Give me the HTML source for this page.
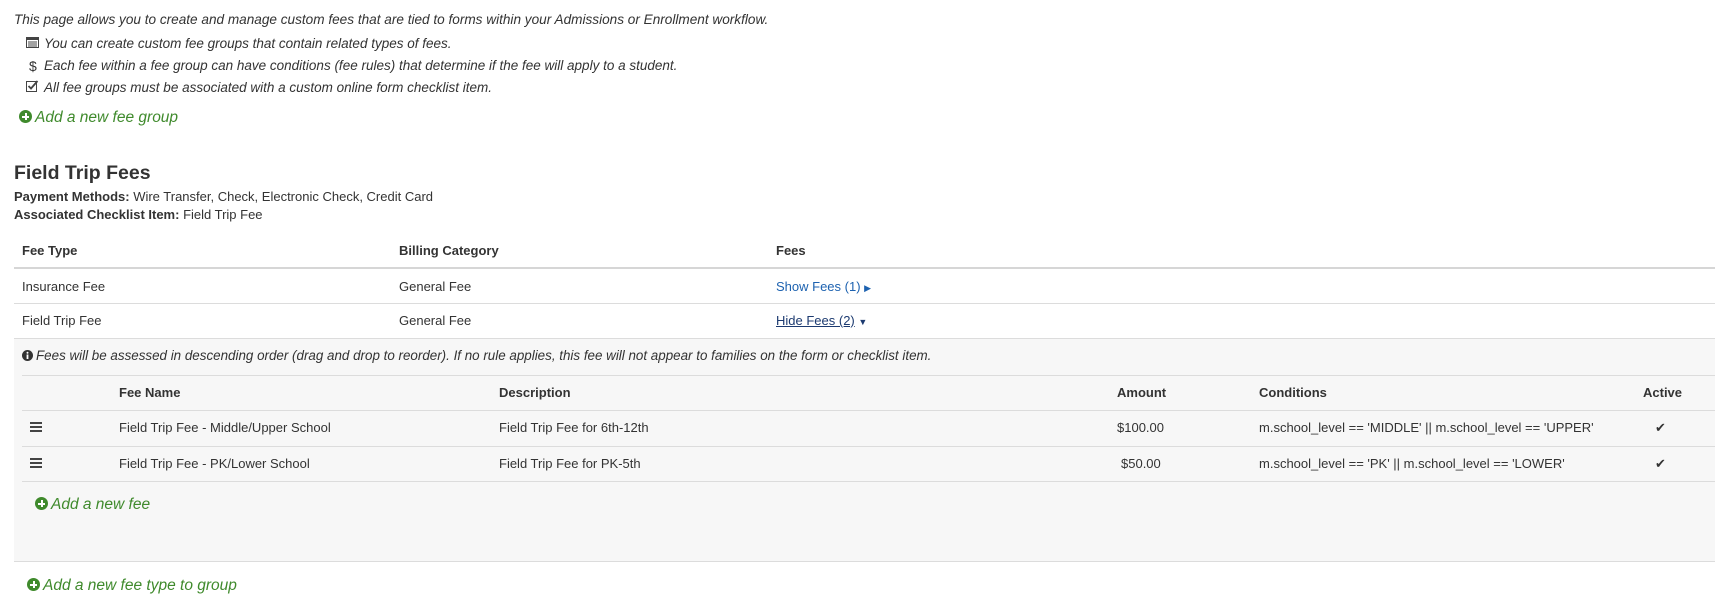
<!DOCTYPE html>
<html><head><meta charset="utf-8"><style>
*{margin:0;padding:0;box-sizing:border-box}
body{width:1715px;height:608px;background:#fff;font-family:"Liberation Sans",sans-serif;color:#333;font-size:13px;position:relative;overflow:hidden}
.a{position:absolute;white-space:nowrap;line-height:16px}
.i{font-style:italic}
.b{font-weight:bold}
.g{color:#3f8a2c;font-style:italic;font-size:15.5px}
.hl{position:absolute;height:1px;background:#dcdcdc}
.plus{display:inline-block;width:13px;height:13px;border-radius:50%;background:#3f8a2c;position:relative;vertical-align:-1px;margin-right:3px}
.plus:before{content:"";position:absolute;left:3px;top:5.5px;width:7px;height:2px;background:#fff}
.plus:after{content:"";position:absolute;left:5.5px;top:3px;width:2px;height:7px;background:#fff}
.drag{position:absolute;width:12px;height:10px;border-top:2px solid #444;border-bottom:2px solid #444}
.drag:after{content:"";position:absolute;left:0;right:0;top:2px;height:2px;background:#444}
</style></head><body>
<div class="a i" style="left:14px;top:12px;font-size:13.6px">This page allows you to create and manage custom fees that are tied to forms within your Admissions or Enrollment workflow.</div>
<svg style="position:absolute;left:26px;top:37px" width="13" height="11"><rect x="0.5" y="0.5" width="12" height="10" fill="none" stroke="#444"/><rect x="0.5" y="0.5" width="12" height="2.5" fill="#444"/><line x1="2" y1="5" x2="11" y2="5" stroke="#444"/><line x1="2" y1="7" x2="11" y2="7" stroke="#444"/><line x1="2" y1="9" x2="11" y2="9" stroke="#444"/></svg>
<div class="a i" style="left:44px;top:36px;font-size:13.5px">You can create custom fee groups that contain related types of fees.</div>
<div class="a" style="left:29px;top:58px;font-size:14px">$</div>
<div class="a i" style="left:44px;top:58px;font-size:13.5px">Each fee within a fee group can have conditions (fee rules) that determine if the fee will apply to a student.</div>
<svg style="position:absolute;left:26px;top:80px" width="13" height="12"><rect x="0.5" y="1.5" width="10" height="10" fill="none" stroke="#444"/><path d="M2.5 6 L5 8.5 L11.5 1" fill="none" stroke="#444" stroke-width="1.8"/></svg>
<div class="a i" style="left:44px;top:80px;font-size:13.5px">All fee groups must be associated with a custom online form checklist item.</div>
<div class="a g" style="left:19px;top:110px"><span class="plus"></span>Add a new fee group</div>
<div class="a" style="left:14px;top:161px;font-size:19.5px;line-height:24px;font-weight:bold;color:#333">Field Trip Fees</div>
<div class="a" style="left:14px;top:189px"><span class="b">Payment Methods:</span> Wire Transfer, Check, Electronic Check, Credit Card</div>
<div class="a" style="left:14px;top:207px"><span class="b">Associated Checklist Item:</span> Field Trip Fee</div>
<div class="a b" style="left:22px;top:243px">Fee Type</div>
<div class="a b" style="left:399px;top:243px">Billing Category</div>
<div class="a b" style="left:776px;top:243px">Fees</div>
<div class="hl" style="left:14px;right:0;top:267px;height:2px;background:#d6d6d6"></div>
<div class="a" style="left:22px;top:279px">Insurance Fee</div>
<div class="a" style="left:399px;top:279px">General Fee</div>
<div class="a" style="left:776px;top:279px;color:#1d62b0">Show Fees (1) <span style="font-size:9px">&#9654;</span></div>
<div class="hl" style="left:14px;right:0;top:303px"></div>
<div class="a" style="left:22px;top:313px">Field Trip Fee</div>
<div class="a" style="left:399px;top:313px">General Fee</div>
<div class="a" style="left:776px;top:313px;color:#1c3a70"><span style="text-decoration:underline">Hide Fees (2)</span> <span style="font-size:9px">&#9660;</span></div>
<div style="position:absolute;left:14px;right:0;top:338px;height:224px;background:#f7f7f7;border-top:1px solid #dcdcdc;border-bottom:1px solid #dcdcdc"></div>
<svg style="position:absolute;left:22px;top:350px" width="11" height="11"><circle cx="5.5" cy="5.5" r="5.5" fill="#333"/><rect x="4.6" y="4.5" width="1.8" height="4.5" fill="#fff"/><circle cx="5.5" cy="2.8" r="1" fill="#fff"/></svg>
<div class="a i" style="left:36px;top:348px;font-size:13.4px">Fees will be assessed in descending order (drag and drop to reorder). If no rule applies, this fee will not appear to families on the form or checklist item.</div>
<div class="hl" style="left:22px;right:0;top:375px"></div>
<div class="a b" style="left:119px;top:385px">Fee Name</div>
<div class="a b" style="left:499px;top:385px">Description</div>
<div class="a b" style="left:1117px;top:385px">Amount</div>
<div class="a b" style="left:1259px;top:385px">Conditions</div>
<div class="a b" style="left:1643px;top:385px">Active</div>
<div class="hl" style="left:22px;right:0;top:410px"></div>
<div class="drag" style="left:30px;top:422px"></div>
<div class="a" style="left:119px;top:420px">Field Trip Fee - Middle/Upper School</div>
<div class="a" style="left:499px;top:420px">Field Trip Fee for 6th-12th</div>
<div class="a" style="left:1117px;top:420px">$100.00</div>
<div class="a" style="left:1259px;top:420px">m.school_level == 'MIDDLE' || m.school_level == 'UPPER'</div>
<div class="a" style="left:1655px;top:420px">&#10004;</div>
<div class="hl" style="left:22px;right:0;top:446px"></div>
<div class="drag" style="left:30px;top:458px"></div>
<div class="a" style="left:119px;top:456px">Field Trip Fee - PK/Lower School</div>
<div class="a" style="left:499px;top:456px">Field Trip Fee for PK-5th</div>
<div class="a" style="left:1121px;top:456px">$50.00</div>
<div class="a" style="left:1259px;top:456px">m.school_level == 'PK' || m.school_level == 'LOWER'</div>
<div class="a" style="left:1655px;top:456px">&#10004;</div>
<div class="hl" style="left:22px;right:0;top:481px"></div>
<div class="a g" style="left:35px;top:497px"><span class="plus"></span>Add a new fee</div>
<div class="a g" style="left:27px;top:578px"><span class="plus"></span>Add a new fee type to group</div>
</body></html>
